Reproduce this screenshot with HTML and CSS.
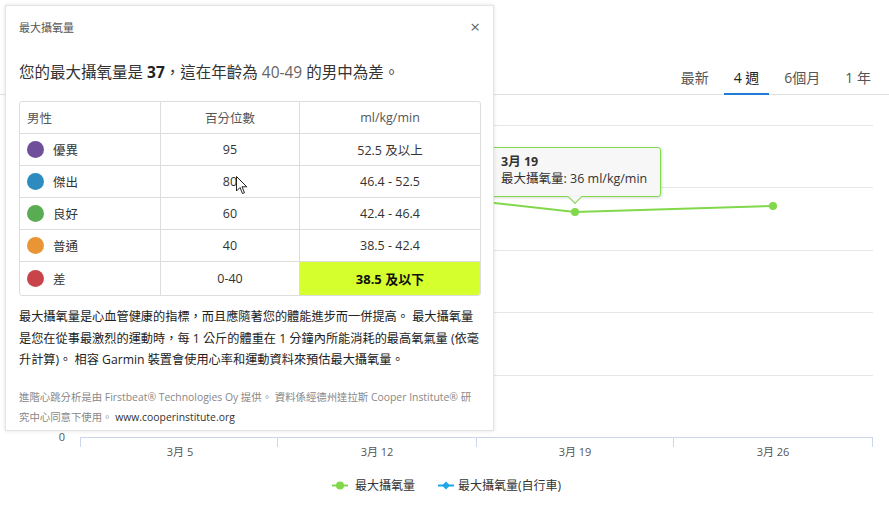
FILE: index.html
```html
<!DOCTYPE html>
<html lang="zh-Hant">
<head>
<meta charset="utf-8">
<title>最大攝氧量</title>
<link rel="stylesheet" href="styles.css">
</head>
<body>
<div class="page">
  <div class="tabs">
    <span class="tab">最新</span>
    <span class="tab active">4 週</span>
    <span class="tab">6個月</span>
    <span class="tab">1 年</span>
  </div>
  <svg class="chart" width="889" height="411" viewBox="0 95 889 411" xmlns="http://www.w3.org/2000/svg">
    <g stroke="#e6e6e6" stroke-width="1">
      <line x1="80" y1="125.5" x2="873" y2="125.5"/>
      <line x1="80" y1="187.5" x2="873" y2="187.5"/>
      <line x1="80" y1="250.5" x2="873" y2="250.5"/>
      <line x1="80" y1="312.5" x2="873" y2="312.5"/>
      <line x1="80" y1="375.5" x2="873" y2="375.5"/>
    </g>
    <g stroke="#ccd6eb" stroke-width="1">
      <line x1="80" y1="437.5" x2="873" y2="437.5"/>
      <line x1="80.5" y1="437" x2="80.5" y2="447"/>
      <line x1="277.5" y1="437" x2="277.5" y2="447"/>
      <line x1="476.5" y1="437" x2="476.5" y2="447"/>
      <line x1="673.5" y1="437" x2="673.5" y2="447"/>
      <line x1="872.5" y1="437" x2="872.5" y2="447"/>
    </g>
    <g class="axis-label" text-anchor="middle">
      <text x="62" y="441">0</text>
      <text x="180" y="456">3月 5</text>
      <text x="377" y="456">3月 12</text>
      <text x="575" y="456">3月 19</text>
      <text x="773" y="456">3月 26</text>
    </g>
    <polyline points="377,190 575,212 773,206" fill="none" stroke="#80d84a" stroke-width="2"/>
    <circle cx="575" cy="212" r="4" fill="#80d84a"/>
    <circle cx="773" cy="206" r="4" fill="#80d84a"/>
    <g class="legend">
      <line x1="332" y1="485.5" x2="348" y2="485.5" stroke="#80d84a" stroke-width="2"/>
      <circle cx="340" cy="485.5" r="4" fill="#80d84a"/>
      <text x="355" y="489.5">最大攝氧量</text>
      <line x1="438" y1="485.5" x2="454" y2="485.5" stroke="#1ea7e6" stroke-width="2"/>
      <path d="M446 481.5 L450 485.5 L446 489.5 L442 485.5 Z" fill="#1ea7e6"/>
      <text x="458" y="489.5">最大攝氧量(自行車)</text>
    </g>
  </svg>
  <div class="tooltip">
    <div class="tip-date">3月 19</div>
    <div class="tip-value">最大攝氧量: 36 ml/kg/min</div>
    <span class="tip-arrow"></span>
  </div>
  <div class="modal">
    <div class="modal-head">
      <span class="modal-title">最大攝氧量</span>
      <span class="modal-close">×</span>
    </div>
    <p class="summary">您的最大攝氧量是 <b>37</b>，這在年齡為 <span class="age">40-49</span> 的男中為差。</p>
    <table class="levels">
      <thead>
        <tr><th class="c1">男性</th><th class="c2">百分位數</th><th class="c3">ml/kg/min</th></tr>
      </thead>
      <tbody>
        <tr><td class="c1"><span class="dot purple"></span>優異</td><td class="c2">95</td><td class="c3">52.5 及以上</td></tr>
        <tr><td class="c1"><span class="dot blue"></span>傑出</td><td class="c2">80</td><td class="c3">46.4 - 52.5</td></tr>
        <tr><td class="c1"><span class="dot green"></span>良好</td><td class="c2">60</td><td class="c3">42.4 - 46.4</td></tr>
        <tr><td class="c1"><span class="dot orange"></span>普通</td><td class="c2">40</td><td class="c3">38.5 - 42.4</td></tr>
        <tr class="current"><td class="c1"><span class="dot red"></span>差</td><td class="c2">0-40</td><td class="c3 hl">38.5 及以下</td></tr>
      </tbody>
    </table>
    <p class="desc">最大攝氧量是心血管健康的指標，而且應隨著您的體能進步而一併提高。 最大攝氧量<br>是您在從事最激烈的運動時，每 1 公斤的體重在 1 分鐘內所能消耗的最高氧氣量 (依毫<br>升計算)。 相容 Garmin 裝置會使用心率和運動資料來預估最大攝氧量。</p>
    <p class="credits">進階心跳分析是由 Firstbeat® Technologies Oy 提供。 資料係經德州達拉斯 Cooper Institute® 研<br>究中心同意下使用。 <span class="link">www.cooperinstitute.org</span></p>
  </div>
  <svg class="cursor" width="12" height="19" viewBox="0 0 12 19" xmlns="http://www.w3.org/2000/svg">
    <path d="M0.5 0.5 L0.5 15 L4 11.5 L6.5 17.5 L8.5 16.7 L6 10.8 L10.8 10.8 Z" fill="#fff" stroke="#222" stroke-width="1"/>
  </svg>
</div>
</body>
</html>
```
FILE: styles.css
```css
* { box-sizing: border-box; }
html, body {
  margin: 0;
  padding: 0;
  background: #fff;
}
body {
  font-family: "Open Sans", "Noto Sans CJK TC", sans-serif;
  color: #333;
}
.page {
  position: relative;
  width: 889px;
  height: 506px;
  overflow: hidden;
}
.tabs {
  display: flex;
  justify-content: flex-end;
  align-items: flex-end;
  gap: 5px;
  height: 95px;
  padding-right: 8px;
  border-bottom: 1px solid #e0e0e0;
}
.tab {
  height: 32px;
  line-height: 30px;
  padding: 0 10px;
  margin-bottom: -1px;
  font-size: 14px;
  color: #555;
  border-bottom: 2px solid transparent;
}
.tab.active {
  color: #222;
  border-bottom-color: #1f7fd6;
}
.chart {
  display: block;
}
.axis-label text {
  font-size: 11px;
  fill: #555;
}
.legend text {
  font-size: 12px;
  fill: #333;
}
.tooltip {
  position: absolute;
  left: 486px;
  top: 147px;
  width: 175px;
  height: 50px;
  padding: 6px 0 0 14px;
  background: rgba(247, 247, 247, 0.95);
  border: 1px solid #80d84a;
  border-radius: 3px;
  box-shadow: 1px 1px 3px rgba(0, 0, 0, 0.15);
  color: #333;
}
.tip-date {
  font-weight: bold;
  font-size: 12.5px;
  line-height: 16px;
}
.tip-value {
  font-size: 12.5px;
  line-height: 16px;
  margin-top: 1px;
}
.tip-arrow {
  position: absolute;
  left: 83px;
  bottom: -6px;
  width: 10px;
  height: 10px;
  background: #f7f7f7;
  border-right: 1px solid #80d84a;
  border-bottom: 1px solid #80d84a;
  transform: rotate(45deg);
}
.modal {
  position: absolute;
  left: 5px;
  top: 5px;
  width: 489px;
  height: 426px;
  padding: 14px 13px 0 13px;
  background: #fff;
  border: 1px solid #e4e4e4;
  box-shadow: 0 0 4px rgba(0, 0, 0, 0.12);
}
.modal-head {
  display: flex;
  justify-content: space-between;
  align-items: center;
  height: 14px;
}
.modal-title {
  font-size: 11px;
  color: #555;
}
.modal-close {
  font-size: 17px;
  color: #666;
  line-height: 14px;
}
.summary {
  margin: 26px 0 0 0;
  font-size: 15.5px;
  line-height: 24px;
  color: #333;
}
.summary b {
  color: #222;
}
.summary .age {
  color: #666;
}
.levels {
  margin-top: 17px;
  width: 462px;
  border-collapse: separate;
  border-spacing: 0;
  border: 1px solid #ddd;
  border-radius: 3px;
  font-size: 12.5px;
  table-layout: fixed;
}
.levels th,
.levels td {
  height: 32px;
  padding: 0;
  text-align: center;
  border-right: 1px solid #ddd;
  border-bottom: 1px solid #ddd;
  font-weight: normal;
  color: #333;
}
.levels th {
  color: #555;
}
.levels tr > :last-child {
  border-right: none;
}
.levels tbody tr:last-child td {
  border-bottom: none;
  height: 33px;
}
.levels .c1 {
  width: 141px;
  text-align: left;
  padding-left: 7px;
}
.levels .c2 {
  width: 139px;
}
.levels td.c1 {
  display: flex;
  align-items: center;
  gap: 9px;
}
.dot {
  display: inline-block;
  width: 17px;
  height: 17px;
  border-radius: 50%;
}
.dot.purple { background: #6f4e9a; }
.dot.blue { background: #2e8bbf; }
.dot.green { background: #5aac52; }
.dot.orange { background: #e99435; }
.dot.red { background: #c9444a; }
.levels td.hl {
  background: #d6ff2e;
  font-weight: bold;
  color: #111;
  font-size: 13px;
  border-bottom-right-radius: 3px;
}
.desc {
  margin: 10px 0 0 0;
  font-size: 12.2px;
  line-height: 21.5px;
  color: #222;
  white-space: nowrap;
}
.credits {
  margin: 16px 0 0 0;
  font-size: 10.4px;
  line-height: 20px;
  color: #888;
  white-space: nowrap;
}
.credits .link {
  color: #333;
}
.cursor {
  position: absolute;
  left: 236px;
  top: 176px;
}
```
